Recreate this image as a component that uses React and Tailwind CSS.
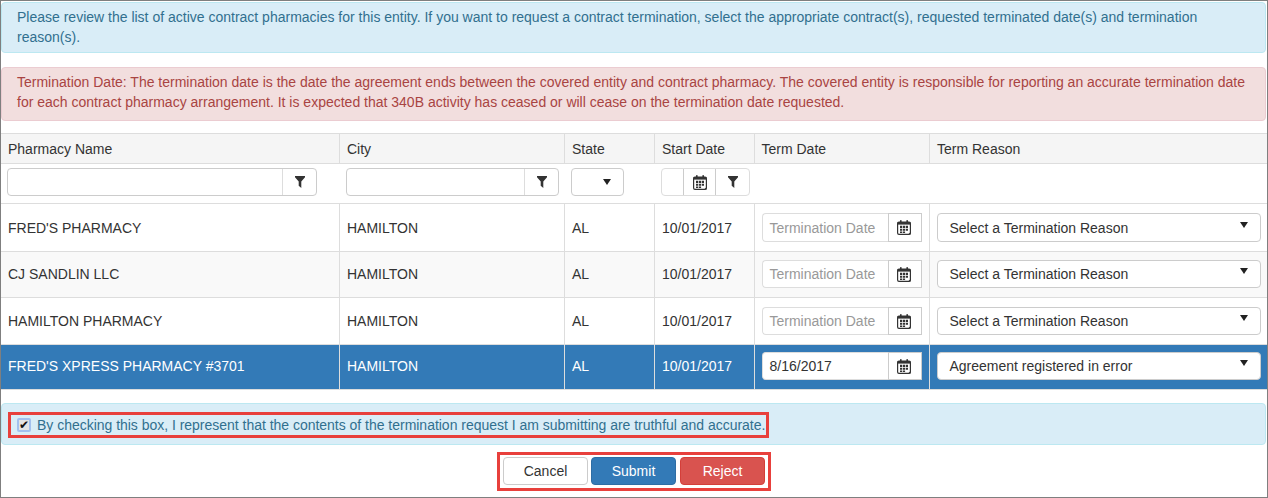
const rows = [
  { name: "FRED'S PHARMACY", h: "h-[48px]", bg: "bg-white", inputH: "h-[29px]", lift: "" },
  { name: "CJ SANDLIN LLC", h: "h-[46px]", bg: "bg-[#f9f9f9]", inputH: "h-[28px]", lift: "pb-[1px]" },
  { name: "HAMILTON PHARMACY", h: "h-[47px]", bg: "bg-white", inputH: "h-[28px]", lift: "" },
];

const headers = [
  { label: "Pharmacy Name", pad: "px-[7px] border-l-0" },
  { label: "City", pad: "px-[7.5px]" },
  { label: "State", pad: "px-[7.5px]" },
  { label: "Start Date", pad: "px-[7.5px]" },
  { label: "Term Date", pad: "px-[7px]" },
  { label: "Term Reason", pad: "px-[7.5px] border-r-0" },
];

const cell = "border border-[#ddd] align-middle font-normal text-left";
const text = `${cell} px-[7.5px]`;
const control = `${cell} px-[7px]`;
const filter = "border-y border-[#ddd] px-[7px] pt-[4px] align-top";

function FilterIcon() {
  return (
    <svg width="10" height="12" viewBox="0 0 10 12" className="block">
      <path d="M0 0h10v1.2L6.3 5.4V12L3.7 9.8V5.4L0 1.2z" fill="#333" />
    </svg>
  );
}

function CalendarIcon() {
  return (
    <svg width="14" height="15" viewBox="0 0 14 15" className="block">
      <rect x="0.6" y="2" width="12.8" height="12.4" rx="1.4" fill="#fff" stroke="#333" strokeWidth="1.2" />
      <rect x="0.6" y="2" width="12.8" height="2.6" fill="#333" />
      <rect x="3" y="0.2" width="1.6" height="2.6" fill="#333" />
      <rect x="9.4" y="0.2" width="1.6" height="2.6" fill="#333" />
      <path d="M3 5.8h2.2V8H3zM5.9 5.8h2.2V8H5.9zM8.8 5.8H11V8H8.8zM3 8.7h2.2v2.1H3zM5.9 8.7h2.2v2.1H5.9zM8.8 8.7H11v2.1H8.8zM3 11.4h2.2v1.6H3zM5.9 11.4h2.2v1.6H5.9zM11 14.6h2.6V12z" fill="#333" />
    </svg>
  );
}

function Caret() {
  return (
    <svg width="8" height="6" viewBox="0 0 8 6" className="block">
      <path d="M0 0h8L4 6z" fill="#222" />
    </svg>
  );
}

function TextFilter({ width }) {
  return (
    <div className={`flex h-[28px] ${width} rounded-[4px] border border-[#ccc] bg-white`}>
      <div className="flex-1" />
      <div className="flex w-[34px] items-center justify-center border-l border-[#ddd]">
        <FilterIcon />
      </div>
    </div>
  );
}

function DateInput({ value, height }) {
  return (
    <div className={`flex ${height} w-[160px]`}>
      <div
        className={`flex w-[126px] items-center rounded-l-[4px] border border-r-0 border-[#ddd] bg-white pl-[7px] ${
          value ? "text-[#333]" : "text-[#999]"
        }`}
      >
        {value || "Termination Date"}
      </div>
      <div className="flex w-[34px] items-center justify-center border border-[#ccc] bg-white pr-[2px]">
        <CalendarIcon />
      </div>
    </div>
  );
}

function ReasonSelect({ value, height }) {
  return (
    <div className={`flex ${height} w-[324px] items-center justify-between rounded-[4px] border border-[#ccc] bg-white px-[12px] text-[#333]`}>
      <span>{value}</span>
      <span className="mb-[6px]">
        <Caret />
      </span>
    </div>
  );
}

export default function App() {
  return (
    <div className="h-[498px] w-[1268px] overflow-hidden border border-[#7f7f7f] bg-white font-['Liberation_Sans',Arial,sans-serif] text-[14px] leading-[20px] text-[#333]">
      <div className="mr-[1px] mt-[1px] h-[51px] rounded-[4px] border border-[#bce8f1] bg-[#d9edf7] px-[15px] py-[4px] text-[#31708f]">
        Please review the list of active contract pharmacies for this entity. If you want to request a contract termination, select the appropriate contract(s), requested terminated date(s) and termination reason(s).
      </div>
      <div className="mr-[1px] mt-[14px] h-[54px] rounded-[4px] border border-[#ebccd1] bg-[#f2dede] px-[15px] py-[4px] text-[#a94442]">
        Termination Date: The termination date is the date the agreement ends between the covered entity and contract pharmacy. The covered entity is responsible for reporting an accurate termination date for each contract pharmacy arrangement. It is expected that 340B activity has ceased or will cease on the termination date requested.
      </div>

      <table className="mt-[12px] w-[1266px] table-fixed border-collapse">
        <colgroup>
          <col className="w-[338px]" />
          <col className="w-[225px]" />
          <col className="w-[90px]" />
          <col className="w-[100px]" />
          <col className="w-[175px]" />
          <col />
        </colgroup>
        <thead>
          <tr className="h-[30px] bg-[#f5f5f5]">
            {headers.map((h) => (
              <th key={h.label} className={`${cell} ${h.pad}`}>
                {h.label}
              </th>
            ))}
          </tr>
          <tr className="h-[40px] bg-white">
            <td className="border-y border-[#ddd] pl-[6px] pr-[7px] pt-[4px] align-top">
              <TextFilter width="w-[310px]" />
            </td>
            <td className={filter}>
              <TextFilter width="w-[213px]" />
            </td>
            <td className={filter}>
              <div className="flex h-[28px] w-[53px] items-center justify-end rounded-[4px] border border-[#ccc] pr-[12px]">
                <Caret />
              </div>
            </td>
            <td className={filter} colSpan={3}>
              <div className="flex h-[28px] w-[89px] rounded-[4px] border border-[#ddd]">
                <div className="w-[21px]" />
                <div className="flex w-[33px] items-center justify-center border-x border-[#ccc]">
                  <CalendarIcon />
                </div>
                <div className="flex flex-1 items-center justify-center">
                  <FilterIcon />
                </div>
              </div>
            </td>
          </tr>
        </thead>
        <tbody>
          {rows.map((r) => (
            <tr key={r.name} className={`${r.h} ${r.bg}`}>
              <td className={`${cell} ${r.lift} border-l-0 px-[7px]`}>{r.name}</td>
              <td className={`${text} ${r.lift}`}>HAMILTON</td>
              <td className={`${text} ${r.lift}`}>AL</td>
              <td className={`${text} ${r.lift}`}>10/01/2017</td>
              <td className={`${control} ${r.lift}`}>
                <DateInput height={r.inputH} />
              </td>
              <td className={`${control} ${r.lift} border-r-0`}>
                <ReasonSelect value="Select a Termination Reason" height={r.inputH} />
              </td>
            </tr>
          ))}
          <tr className="h-[45px] bg-[#337ab7] text-white">
            <td className={`${cell} border-l-0 px-[7px] pb-[2px]`}>FRED'S XPRESS PHARMACY #3701</td>
            <td className={`${text} pb-[2px]`}>HAMILTON</td>
            <td className={`${text} pb-[2px]`}>AL</td>
            <td className={`${text} pb-[2px]`}>10/01/2017</td>
            <td className={`${control} pb-[2px]`}>
              <DateInput value="8/16/2017" height="h-[28px]" />
            </td>
            <td className={`${control} border-r-0 pb-[2px]`}>
              <ReasonSelect value="Agreement registered in error" height="h-[28px]" />
            </td>
          </tr>
        </tbody>
      </table>

      <div className="mr-[1px] mt-[13px] h-[42px] rounded-[4px] border border-[#bce8f1] bg-[#d9edf7] pl-[6px] pt-[8px] text-[#31708f]">
        <div className="flex h-[26px] w-[761px] items-center border-[3px] border-[#e8403c] pb-[1px] pl-[6px]">
          <span className="mr-[6px] flex h-[14px] w-[14px] items-center justify-center rounded-[2px] border-2 border-[#a3c0ee] bg-[#e4e4e4] text-[12px] leading-none text-[#111]">
            ✔
          </span>
          <span className="whitespace-nowrap tracking-[-0.02px]">
            By checking this box, I represent that the contents of the termination request I am submitting are truthful and accurate.
          </span>
        </div>
      </div>

      <div className="mt-[7px] flex justify-center">
        <div className="flex h-[39px] items-center border-[3px] border-[#e8403c] px-[3px] pb-[1px]">
          <button className="h-[28px] w-[85px] rounded-[4px] border border-[#ccc] bg-white text-[#333]">Cancel</button>
          <button className="ml-[3px] h-[28px] w-[85px] rounded-[4px] border border-[#2e6da4] bg-[#337ab7] text-white">Submit</button>
          <button className="ml-[4px] h-[28px] w-[85px] rounded-[4px] border border-[#d43f3a] bg-[#d9534f] text-white">Reject</button>
        </div>
      </div>
    </div>
  );
}
